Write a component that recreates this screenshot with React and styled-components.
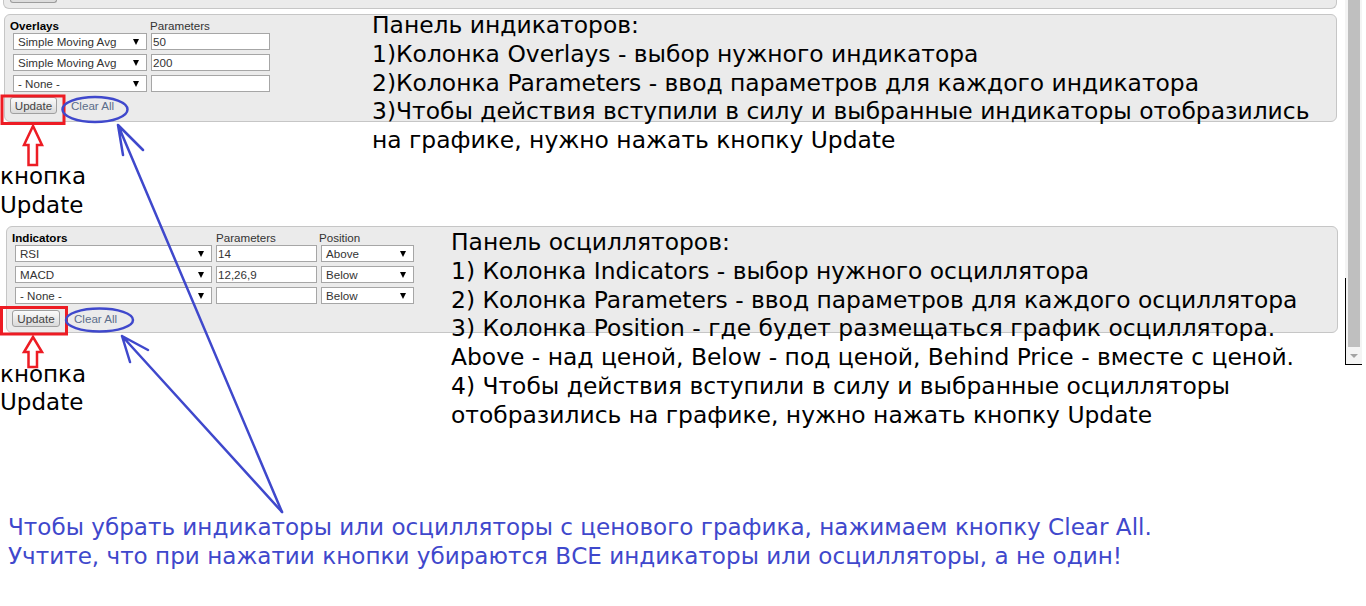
import React from "react";
import styled, { createGlobalStyle } from "styled-components";

const GlobalStyle = createGlobalStyle`
  html, body {
    margin: 0;
    padding: 0;
    background: #fff;
  }
  body {
    font-family: "DejaVu Sans", Verdana, sans-serif;
    overflow: hidden;
  }
`;

const Page = styled.div`
  position: relative;
  width: 1366px;
  height: 606px;
  overflow: hidden;
  background: #fff;
`;

const PrevPanel = styled.div`
  margin-left: 3px;
  width: 1334px;
  height: 9px;
  box-sizing: border-box;
  padding-left: 6px;
  background: #ebebeb;
  border: 1px solid #c6c6c6;
  border-top: none;
  border-radius: 0 0 6px 6px;
`;

const PrevButton = styled.div`
  width: 47px;
  height: 3px;
  box-sizing: border-box;
  background: #dcdcdc;
  border: 1px solid #9c9c9c;
  border-top: none;
  border-radius: 0 0 3px 3px;
`;

const Section = styled.section`
  display: grid;
  margin-top: ${(p) => p.$top}px;

  & > * {
    grid-area: 1 / 1;
  }
`;

const LeftStack = styled.div`
  display: flex;
  flex-direction: column;
  align-items: flex-start;
`;

const Panel = styled.div`
  margin-top: ${(p) => p.$top}px;
  margin-left: ${(p) => p.$left}px;
  width: ${(p) => p.$width}px;
  height: ${(p) => p.$height}px;
  box-sizing: border-box;
  padding: 4px 5px 0;
  background: #ebebeb;
  border: 1px solid #c6c6c6;
  border-radius: 6px;
  font-family: "Liberation Sans", Arial, sans-serif;
  font-size: 11.6px;
  color: #333;
`;

const FieldRow = styled.div`
  display: grid;
  grid-template-columns: ${(p) => p.$cols};
  height: ${(p) => (p.$header ? 13 : 17)}px;
  margin-bottom: ${(p) => (p.$header ? 1 : 4)}px;
  align-items: center;
`;

const ColumnLabel = styled.div`
  line-height: 13px;
  white-space: nowrap;
  font-weight: ${(p) => (p.$bold ? "bold" : "normal")};
  color: ${(p) => (p.$bold ? "#000" : "#333")};
`;

const SelectBox = styled.div`
  margin-left: ${(p) => p.$inset}px;
  width: ${(p) => p.$w}px;
  height: 17px;
  box-sizing: border-box;
  display: flex;
  align-items: center;
  justify-content: space-between;
  padding: 0 7px 0 4px;
  background: #fff;
  border: 1px solid #a6a6a6;
  white-space: nowrap;
`;

const Caret = styled.span`
  width: 0;
  height: 0;
  border-left: 3px solid transparent;
  border-right: 3px solid transparent;
  border-top: 6px solid #000;
`;

const TextField = styled.input`
  margin-left: ${(p) => p.$inset}px;
  width: ${(p) => p.$w}px;
  height: 17px;
  box-sizing: border-box;
  padding: 0 1px;
  background: #fff;
  border: 1px solid #a6a6a6;
  border-radius: 0;
  font: inherit;
  color: #333;
  outline: none;
`;

const ButtonRow = styled.div`
  display: flex;
  align-items: center;
  margin-top: ${(p) => p.$top}px;
`;

const UpdateButton = styled.button`
  width: ${(p) => p.$w}px;
  height: 17px;
  padding: 0;
  font: inherit;
  color: #444;
  background: linear-gradient(#fbfbfb, #dadada);
  border: 1px solid #a0a0a0;
  border-radius: 3px;
`;

const ClearLink = styled.a`
  margin-left: 14px;
  color: #5a6d8a;
  text-decoration: none;
`;

const Note = styled.div`
  align-self: start;
  margin-top: ${(p) => p.$top}px;
  margin-left: ${(p) => p.$left}px;
  font-size: 23.4px;
  line-height: 28.75px;
  color: #000;
  white-space: nowrap;
`;

const Caption = styled.div`
  margin-top: ${(p) => p.$top}px;
  font-size: 23px;
  line-height: 28.75px;
  color: #000;
`;

const Footer = styled.div`
  margin-top: 84px;
  margin-left: 8px;
  font-size: 23.1px;
  line-height: 29px;
  color: #3f48cc;
  white-space: nowrap;
`;

const Annotations = styled.svg`
  position: absolute;
  top: 0;
  left: 0;
  pointer-events: none;
`;

const Scrollbar = styled.div`
  position: absolute;
  top: 0;
  left: 1345px;
  width: 17px;
  height: 365px;
  box-sizing: border-box;
  display: flex;
  flex-direction: column;
  padding: 0 2px 0 3px;
  background: #f4f4f4;
  border-bottom: 1px solid #000;

  &::before {
    content: "";
    position: absolute;
    left: 0;
    top: 278px;
    bottom: 0;
    width: 1px;
    background: #000;
  }
`;

const Thumb = styled.div`
  flex: 1;
  background: #bfbfbf;
`;

const ScrollArrow = styled.div`
  height: 17px;
  display: flex;
  align-items: center;
  justify-content: center;

  &::after {
    content: "";
    border-left: 4px solid transparent;
    border-right: 4px solid transparent;
    border-top: 4px solid #a3a3a3;
  }
`;

const overlayPanel = {
  left: 4,
  top: 3,
  width: 1333,
  height: 108,
  buttonTop: 5,
  buttonWidth: 47,
  cols: "140px 122px",
  columns: [
    { label: "Overlays", bold: true, kind: "select", inset: 3, w: 134 },
    { label: "Parameters", kind: "input", inset: 1, w: 119 },
  ],
  rows: [
    ["Simple Moving Avg", "50"],
    ["Simple Moving Avg", "200"],
    ["- None -", ""],
  ],
};

const oscillatorPanel = {
  left: 6,
  top: 0,
  width: 1332,
  height: 107,
  buttonTop: 6,
  buttonWidth: 48,
  cols: "204px 103px 100px",
  columns: [
    { label: "Indicators", bold: true, kind: "select", inset: 3, w: 197 },
    { label: "Parameters", kind: "input", inset: 0, w: 101 },
    { label: "Position", kind: "select", inset: 2, w: 93 },
  ],
  rows: [
    ["RSI", "14", "Above"],
    ["MACD", "12,26,9", "Below"],
    ["- None -", "", "Below"],
  ],
};

const ControlPanel = ({ config }) => (
  <Panel
    $left={config.left}
    $top={config.top}
    $width={config.width}
    $height={config.height}
  >
    <FieldRow $header $cols={config.cols}>
      {config.columns.map((col) => (
        <ColumnLabel key={col.label} $bold={col.bold}>
          {col.label}
        </ColumnLabel>
      ))}
    </FieldRow>
    {config.rows.map((row, i) => (
      <FieldRow key={i} $cols={config.cols}>
        {row.map((value, j) => {
          const col = config.columns[j];
          if (col.kind === "select") {
            return (
              <SelectBox key={j} $inset={col.inset} $w={col.w}>
                <span>{value}</span>
                <Caret />
              </SelectBox>
            );
          }
          return (
            <TextField
              key={j}
              $inset={col.inset}
              $w={col.w}
              defaultValue={value}
              readOnly
            />
          );
        })}
      </FieldRow>
    ))}
    <ButtonRow $top={config.buttonTop}>
      <UpdateButton $w={config.buttonWidth}>Update</UpdateButton>
      <ClearLink href="#">Clear All</ClearLink>
    </ButtonRow>
  </Panel>
);

const RED = "#ed1c24";
const BLUE = "#3f48cc";

// hollow "up" arrow drawn in paint: y = apex, head = head depth, len = total
const UpArrow = ({ y, head, len }) => (
  <path
    d={`M33,${y} L24,${y + head} L28.5,${y + head} L28.5,${y + len} L37,${y + len} L37,${y + head} L42,${y + head} Z`}
    fill="none"
    stroke={RED}
    strokeWidth="2.5"
  />
);

const App = () => (
  <>
    <GlobalStyle />
    <Page>
      <PrevPanel>
        <PrevButton />
      </PrevPanel>

      <Section $top={2}>
        <LeftStack>
          <ControlPanel config={overlayPanel} />
          <Caption $top={40}>
            кнопка
            <br />
            Update
          </Caption>
        </LeftStack>
        <Note $top={0} $left={372}>
          <div>Панель индикаторов:</div>
          <div>1)Колонка Overlays - выбор нужного индикатора</div>
          <div>2)Колонка Parameters - ввод параметров для каждого индикатора</div>
          <div>3)Чтобы действия вступили в силу и выбранные индикаторы отобразились</div>
          <div>на графике, нужно нажать кнопку Update</div>
        </Note>
      </Section>

      <Section $top={6.5}>
        <LeftStack>
          <ControlPanel config={oscillatorPanel} />
          <Caption $top={26.7}>
            кнопка
            <br />
            Update
          </Caption>
        </LeftStack>
        <Note $top={2} $left={451}>
          <div>Панель осцилляторов:</div>
          <div>1) Колонка Indicators - выбор нужного осциллятора</div>
          <div>2) Колонка Parameters - ввод параметров для каждого осциллятора</div>
          <div>3) Колонка Position - где будет размещаться график осциллятора.</div>
          <div>Above - над ценой, Below - под ценой, Behind Price - вместе с ценой.</div>
          <div>4) Чтобы действия вступили в силу и выбранные осцилляторы</div>
          <div>отобразились на графике, нужно нажать кнопку Update</div>
        </Note>
      </Section>

      <Footer>
        <div>
          Чтобы убрать индикаторы или осцилляторы с ценового графика, нажимаем
          кнопку Clear All.
        </div>
        <div>
          Учтите, что при нажатии кнопки убираются ВСЕ индикаторы или
          осцилляторы, а не один!
        </div>
      </Footer>

      <Scrollbar>
        <Thumb />
        <ScrollArrow />
      </Scrollbar>

      <Annotations width="1366" height="606" viewBox="0 0 1366 606">
        {/* red frames + arrows around Update */}
        <rect x="2" y="96" width="62" height="27.5" fill="none" stroke={RED} strokeWidth="3" />
        <UpArrow y={126} head={19} len={39} />
        <rect x="1.5" y="307.5" width="65" height="26.5" fill="none" stroke={RED} strokeWidth="3" />
        <UpArrow y={337} head={15} len={30} />

        {/* blue ellipses + pointers to Clear All */}
        <g fill="none" stroke={BLUE} strokeWidth="2.5" strokeLinecap="round">
          <ellipse cx="95" cy="109.5" rx="32.5" ry="12.5" />
          <ellipse cx="99.5" cy="320" rx="33.5" ry="11.5" />
          <path d="M118,125 L282,512 M118,125 L123,155 M118,125 L143,150" />
          <path d="M122,336 L282,512 M122,336 L130,362 M122,336 L148,350" />
        </g>
      </Annotations>
    </Page>
  </>
);

export default App;
